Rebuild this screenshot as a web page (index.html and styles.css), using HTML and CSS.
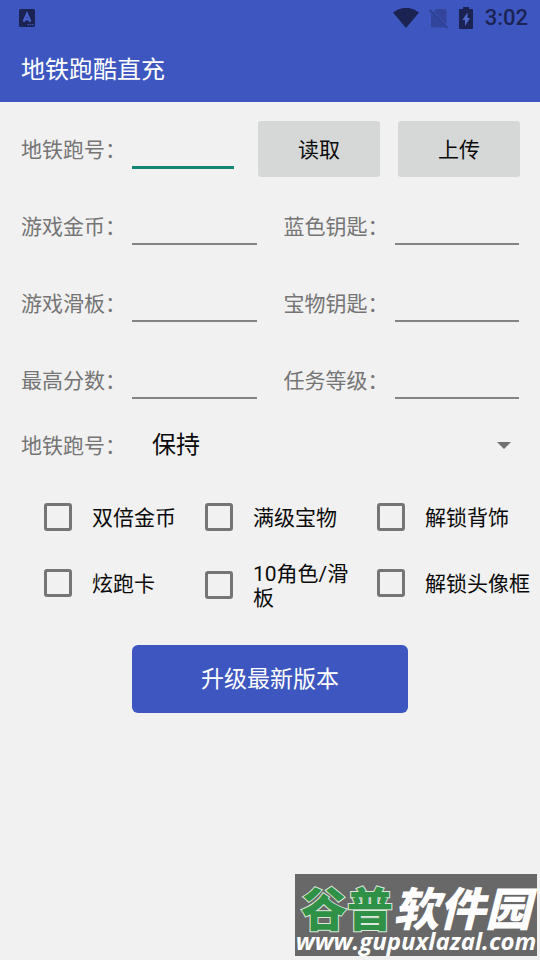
FILE: index.html
```html
<!DOCTYPE html>
<html lang="zh-CN">
<head>
<meta charset="utf-8">
<meta name="viewport" content="width=device-width, initial-scale=1">
<title>地铁跑酷直充</title>
<link rel="stylesheet" href="styles.css">
</head>
<body>
<header class="app-header">
  <div class="status-bar">
    <svg class="status-app" width="16" height="18" viewBox="0 0 16 18" aria-hidden="true">
      <rect width="16" height="18" rx="1.5" fill="#1a2352"/>
      <path d="M4.6 12.8 8 4.8l3.400 8M5.800 10.300h4.400" fill="none" stroke="#4a63cb" stroke-width="2.200"/>
      <path d="M8.500 15.700h1.500m.8 0h1.500m.8 0h1.500" stroke="#4a63cb" stroke-width="1"/>
    </svg>
    <svg width="26" height="20" viewBox="0 0 26 20" aria-hidden="true">
      <path d="M0 4.500Q13-5 26 4.500L13 20Z" fill="#1a2352"/>
    </svg>
    <svg class="status-sim" width="20" height="21" viewBox="0 0 20 21" aria-hidden="true">
      <path d="M7 1h9q1.500 0 1.500 1.500v14.200L4.500 3.500ZM2 5.200 16.500 19.500H3.500Q2 19.500 2 18Z" fill="#32459b"/>
      <path d="M.8 2.200 18.500 20" stroke="#2b3c8b" stroke-width="1.700"/>
    </svg>
    <svg width="14" height="22" viewBox="0 0 14 22" aria-hidden="true">
      <path d="M4 0h6v2h3q1 0 1 1v18q0 1-1 1H1q-1 0-1-1V3q0-1 1-1h3Z" fill="#1a2352"/>
      <path d="M8.500 5.500 3.300 13H6v6l5-8H8.500Z" fill="#5068c9"/>
    </svg>
    <span class="clock">3:02</span>
  </div>
  <h1 class="title">地铁跑酷直充</h1>
</header>
<main>
  <form class="form">
    <div class="row account">
      <div class="field"><label for="account">地铁跑号：</label><input class="focused" id="account" type="text"></div>
      <button class="action" type="button">读取</button>
      <button class="action" type="button">上传</button>
    </div>
    <div class="row pair">
      <div class="field"><label for="coins">游戏金币：</label><input id="coins" type="text"></div>
      <div class="field"><label for="blue-key">蓝色钥匙：</label><input id="blue-key" type="text"></div>
    </div>
    <div class="row pair">
      <div class="field"><label for="board">游戏滑板：</label><input id="board" type="text"></div>
      <div class="field"><label for="treasure-key">宝物钥匙：</label><input id="treasure-key" type="text"></div>
    </div>
    <div class="row pair">
      <div class="field"><label for="score">最高分数：</label><input id="score" type="text"></div>
      <div class="field"><label for="level">任务等级：</label><input id="level" type="text"></div>
    </div>
    <div class="row choice">
      <label for="mode">地铁跑号：</label>
      <select id="mode"><option>保持</option></select>
    </div>
    <div class="options">
      <label class="option"><input type="checkbox"><span>双倍金币</span></label>
      <label class="option"><input type="checkbox"><span>满级宝物</span></label>
      <label class="option"><input type="checkbox"><span>解锁背饰</span></label>
      <label class="option"><input type="checkbox"><span>炫跑卡</span></label>
      <label class="option"><input type="checkbox"><span>10角色/滑板</span></label>
      <label class="option"><input type="checkbox"><span>解锁头像框</span></label>
    </div>
    <button class="upgrade" type="button">升级最新版本</button>
  </form>
</main>
<aside class="watermark">
  <div class="brand"><span class="brand-green">谷普</span>软件园</div>
  <div class="site">www.gupuxlazal.com</div>
</aside>
</body>
</html>
```
FILE: styles.css
```css
* { box-sizing: border-box; }

body {
  position: relative;
  min-height: 100vh;
  margin: 0;
  background: #f1f1f1;
  color: #0a0a0a;
  font-family: Roboto, "Noto Sans CJK SC", sans-serif;
  font-size: 21px;
  line-height: 24px;
}

button, input, select { font: inherit; color: inherit; }

.app-header { background: #3e57c0; }

.status-bar {
  display: flex;
  align-items: center;
  gap: 10px;
  height: 36px;
  padding: 0 12px 0 19px;
  color: #1a2352;
}

.status-app { margin-right: auto; }

.clock {
  margin-left: 2px;
  font-size: 22px;
  font-weight: 500;
}

.title {
  margin: 0;
  padding: 18px 21px 16px;
  color: #fff;
  font-size: 24px;
  font-weight: 400;
  line-height: 32px;
}

.form { padding: 8px 0 0; }

.row {
  display: grid;
  align-items: center;
  height: 77px;
  padding: 0 15px 0 21px;
}

.account {
  grid-template-columns: 1fr 122px 122px;
  gap: 18px;
  padding-right: 20px;
}

.pair {
  grid-template-columns: 1fr 1fr;
  gap: 21px;
}

.field {
  display: flex;
  align-items: center;
  min-width: 0;
}

.row label {
  flex: none;
  padding-top: 2px;
  color: #757575;
}

.field input {
  flex: 1;
  min-width: 0;
  height: 38px;
  margin: 0 6px;
  padding: 0;
  border: 0;
  border-bottom: 2px solid #848484;
  outline: 0;
  background: transparent;
}

.field .focused {
  height: 40px;
  border-bottom: 3px solid #138575;
}

.action {
  height: 56px;
  padding: 2px 0 0;
  border: 0;
  border-radius: 3px;
  background: #d6d8d7;
}

.choice {
  grid-template-columns: auto 1fr;
  height: 54px;
}

.choice select {
  height: 48px;
  margin-left: 6px;
  padding: 0 20px;
  border: 0;
  appearance: none;
  font-size: 24px;
  line-height: 36px;
  background: url("data:image/svg+xml,%3Csvg xmlns='http://www.w3.org/2000/svg' width='14' height='7'%3E%3Cpath d='M0 0h14L7 7z' fill='%23707070'/%3E%3C/svg%3E") no-repeat right 14px center;
}

.options {
  display: grid;
  grid-template-columns: 161fr 172fr 163fr;
  align-items: start;
  padding: 12px 0 0 44px;
}

.option {
  display: flex;
  align-items: center;
  gap: 20px;
  min-height: 66px;
  padding: 10px 0;
}

.option span { padding-top: 2px; }

.option:nth-child(3n + 2) { padding-right: 24px; }

.option input {
  flex: none;
  width: 28px;
  height: 28px;
  margin: 0;
  border: 3px solid #757575;
  border-radius: 3px;
  appearance: none;
}

.option input:checked { background: #138575; }

.upgrade {
  display: block;
  width: calc(100% - 264px);
  height: 68px;
  margin: 25px auto 0;
  padding: 2px 0 0;
  border: 0;
  border-radius: 6px;
  background: #3e57c0;
  color: #fff;
  font-size: 23px;
}

.watermark {
  position: absolute;
  right: 3px;
  bottom: 4px;
  width: 242px;
  height: 82px;
  padding-top: 8px;
  background: #686868;
  color: #fff;
  text-align: center;
  white-space: nowrap;
}

.brand {
  font: italic 900 46px/48px "Noto Sans CJK SC", sans-serif;
}

.brand-green {
  color: #2f9146;
  font-style: normal;
  paint-order: stroke;
  -webkit-text-stroke: 2px #dce8dc;
}

.site { font: italic 700 24px/22px "Open Sans", sans-serif; }
```
